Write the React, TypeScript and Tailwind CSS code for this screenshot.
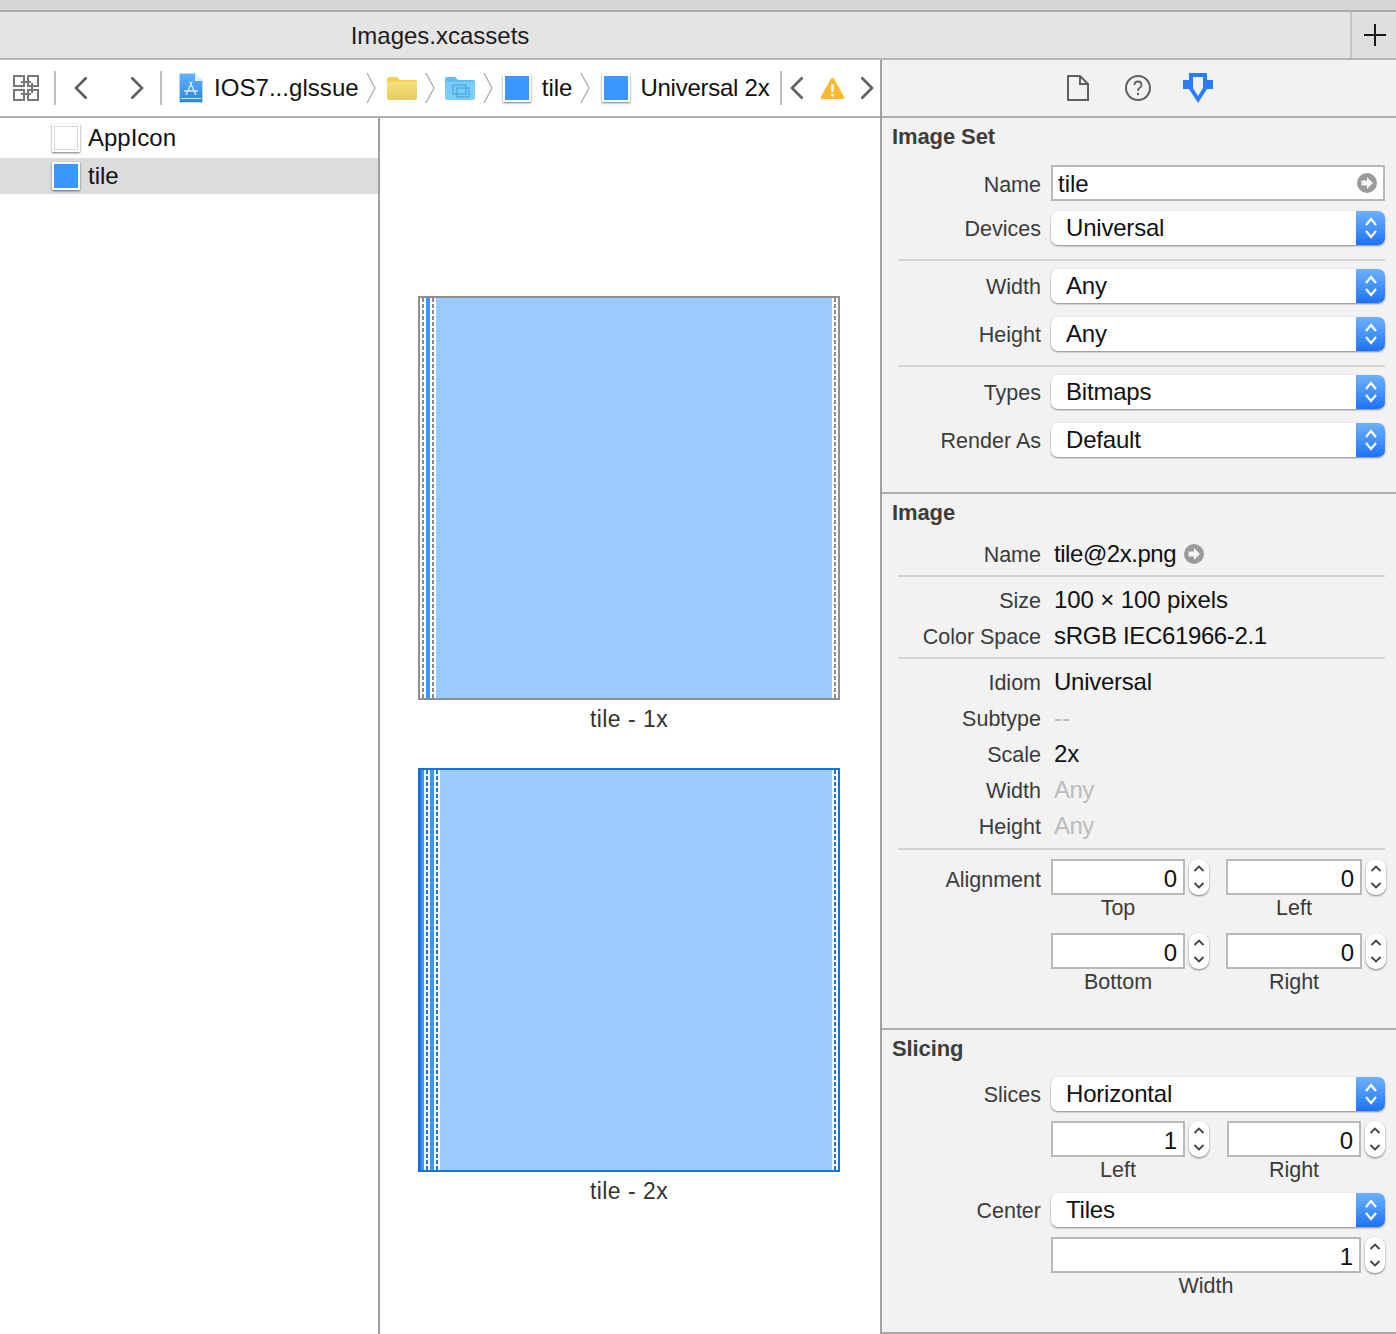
import React from 'react';

const font = 'font-["Liberation_Sans",Arial,sans-serif]';

const Chevron = ({ dir, className = '' }: { dir: 'left' | 'right'; className?: string }) => (
  <svg viewBox="0 0 14 24" className={`w-[14px] h-[24px] shrink-0 ${className}`}>
    <path
      d={dir === 'left' ? 'M12.5 1.5 L2 12 L12.5 22.5' : 'M1.5 1.5 L12 12 L1.5 22.5'}
      fill="none"
      stroke="#5e5e5e"
      strokeWidth="2.6"
    />
  </svg>
);

const Crumb = ({ className = '' }: { className?: string }) => (
  <svg viewBox="0 0 10 32" className={`w-[10px] h-[32px] shrink-0 ${className}`}>
    <path d="M1 1 L9 16 L1 31" fill="none" stroke="#adadad" strokeWidth="1.3" />
  </svg>
);

const NavSep = ({ className = '' }: { className?: string }) => (
  <div className={`w-[2px] h-[34px] bg-[#bdbdbd] shrink-0 ${className}`} />
);

const Swatch = ({ empty, className = '' }: { empty?: boolean; className?: string }) => (
  <div className={`w-[28px] h-[28px] shrink-0 bg-white p-[2px] shadow-[0_1px_2px_rgba(0,0,0,0.55)] ${className}`}>
    <div className={empty ? 'w-full h-full border border-[#d8d8d8] bg-white' : 'w-full h-full bg-[#3a97fd]'} />
  </div>
);

const GoArrow = ({ className = '' }: { className?: string }) => (
  <svg viewBox="0 0 20 20" className={`w-[20px] h-[20px] shrink-0 ${className}`}>
    <circle cx="10" cy="10" r="10" fill="#9b9b9b" />
    <path d="M10 4 L16 10 L10 16 V12.5 H4.5 V7.5 H10 Z" fill="#f4f4f4" />
  </svg>
);

const UpDown = ({ color, className = '' }: { color: string; className?: string }) => (
  <svg viewBox="0 0 14 26" className={`w-[14px] h-[26px] ${className}`}>
    <path d="M2 10 L7 4 L12 10 M2 16 L7 22 L12 16" fill="none" stroke={color} strokeWidth="2.2" />
  </svg>
);

const Popup = ({ value }: { value: string }) => (
  <div className="flex flex-1 h-[34px] rounded-[7px] bg-white shadow-[0_1px_2px_rgba(0,0,0,0.45)] overflow-hidden">
    <div className="flex-1 pl-[15px] text-[24px] leading-[34px] tracking-[-0.2px] text-[#111]">{value}</div>
    <div className="w-[29px] flex items-center justify-center bg-gradient-to-b from-[#6db1fb] to-[#1a72f8]">
      <UpDown color="#fff" />
    </div>
  </div>
);

const Stepper = () => (
  <div className="w-[20px] h-[36px] shrink-0 ml-[4px] rounded-[9px] bg-white shadow-[0_1px_2px_rgba(0,0,0,0.5)] flex items-center justify-center">
    <svg viewBox="0 0 12 30" className="w-[12px] h-[30px]">
      <path d="M1.5 9 L6 4.5 L10.5 9 M1.5 21 L6 25.5 L10.5 21" fill="none" stroke="#444" strokeWidth="1.8" />
    </svg>
  </div>
);

const NumField = ({ value, className = '' }: { value: string; className?: string }) => (
  <div className={`h-[36px] border-2 border-[#b9b9b9] bg-white text-right pr-[6px] text-[24px] leading-[35px] text-[#111] ${className}`}>
    {value}
  </div>
);

const Label = ({ children, className = 'pt-[2px] leading-[30px]' }: { children: React.ReactNode; className?: string }) => (
  <div className={`w-[159px] shrink-0 text-right text-[21.5px] text-[#3b3b3b] mr-[10px] ${className}`}>{children}</div>
);

const Row = ({ label, children, className = '', labelClass }: { label: string; children: React.ReactNode; className?: string; labelClass?: string }) => (
  <div className={`flex items-center ${className}`}>
    <Label className={labelClass}>{label}</Label>
    <div className="flex flex-1 items-center min-w-0">{children}</div>
  </div>
);

const InfoRow = ({ label, value, muted, spacing = 'tracking-[-0.1px]' }: { label: string; value: string; muted?: boolean; spacing?: string }) => (
  <div className="flex items-center h-[36px]">
    <Label>{label}</Label>
    <div className={`pl-[3px] text-[24px] ${spacing} ${muted ? 'text-[#bcbcbc]' : 'text-[#111]'}`}>{value}</div>
  </div>
);

const Sep = ({ className = '' }: { className?: string }) => (
  <div className={`h-[2px] bg-[#d2d2d2] ml-[16px] ${className}`} />
);

const Heading = ({ children }: { children: React.ReactNode }) => (
  <div className="pl-[10px] text-[22px] leading-[28px] font-bold tracking-[-0.1px] text-[#3d3d3d]">{children}</div>
);

const SubLabel = ({ children, className = '' }: { children: React.ReactNode; className?: string }) => (
  <div className={`text-center text-[21.5px] leading-[26px] text-[#3b3b3b] ${className}`}>{children}</div>
);

const Dashes = ({ selected }: { selected?: boolean }) => (
  <div className="w-[6px] bg-white flex justify-center">
    <div
      className={`w-[2px] h-full ${
        selected
          ? 'bg-[repeating-linear-gradient(to_bottom,#1f78e0_0,#1f78e0_4px,transparent_4px,transparent_6px)]'
          : 'bg-[repeating-linear-gradient(to_bottom,#8a8a8a_0,#8a8a8a_4px,transparent_4px,transparent_6px)]'
      }`}
    />
  </div>
);

const Tile = ({ selected, caption }: { selected?: boolean; caption: string }) => (
  <div className="w-[422px]">
    <div className={`h-[404px] border-2 flex ${selected ? 'border-[#1a6fd8]' : 'border-[#8f8f8f]'}`}>
      {selected && <div className="w-[1px] bg-[#1a6fd8]" />}
      {selected && <div className="w-[3px] bg-[#3a97fd]" />}
      <Dashes selected={selected} />
      <div className="w-[4px] bg-[#3a97fd]" />
      <Dashes selected={selected} />
      <div className="flex-1 bg-[#9bcbfe]" />
      <Dashes selected={selected} />
    </div>
    <div className="text-center text-[23px] leading-[26px] tracking-[0.45px] mt-[6px] text-[#333]">{caption}</div>
  </div>
);

const App = () => {
  return (
    <div className={`w-[1396px] h-[1334px] overflow-hidden flex flex-col bg-white ${font}`}>
      {/* tab strip */}
      <div className="h-[12px] shrink-0 bg-[#d6d6d6] border-b-2 border-[#ababab]" />
      <div className="h-[48px] shrink-0 flex bg-[#e4e4e4] border-b-2 border-[#b5b5b5]">
        <div className="w-[880px] text-center text-[24px] leading-[48px] text-[#1c1c1c]">Images.xcassets</div>
        <div className="flex-1" />
        <div className="w-[46px] border-l-2 border-[#c4c4c4] bg-[#dfdfdf] flex items-center justify-center pl-[2px]">
          <svg viewBox="0 0 22 22" className="w-[22px] h-[22px]">
            <path d="M11 0 V22 M0 11 H22" stroke="#1a1a1a" strokeWidth="2" />
          </svg>
        </div>
      </div>

      <div className="flex flex-1 min-h-0">
        {/* editor side */}
        <div className="w-[882px] shrink-0 flex flex-col border-r-2 border-[#a2a2a2]">
          <div className="h-[58px] shrink-0 flex items-center border-b-2 border-[#b0b0b0] text-[24px] text-[#111]">
            <svg viewBox="0 0 26 26" className="w-[26px] h-[26px] ml-[13px] shrink-0">
              <g fill="none" stroke="#777" strokeWidth="2">
                <rect x="1" y="1" width="10" height="10" />
                <rect x="15" y="1" width="10" height="10" />
                <rect x="1" y="15" width="10" height="10" />
                <rect x="15" y="15" width="10" height="10" />
                <path d="M8 7 H18 M19 8 V18 M8 19 H18" />
              </g>
            </svg>
            <NavSep className="ml-[15px]" />
            <Chevron dir="left" className="ml-[18px]" />
            <Chevron dir="right" className="ml-[42px]" />
            <NavSep className="ml-[16px]" />
            <svg viewBox="0 0 24 30" className="w-[24px] h-[30px] ml-[17px] shrink-0">
              <defs>
                <linearGradient id="docBlue" x1="0" y1="0" x2="0" y2="1">
                  <stop offset="0" stopColor="#62b4f7" />
                  <stop offset="1" stopColor="#2f83e4" />
                </linearGradient>
              </defs>
              <path d="M0.5 0.5 H16 L23.5 8 V29.5 H0.5 Z" fill="url(#docBlue)" stroke="#b9d9f7" strokeWidth="1" />
              <path d="M16 0.5 V8 H23.5 Z" fill="#e6f0fb" />
              <path d="M2 25.5 H22" stroke="#cfe4fb" strokeWidth="1" />
              <path d="M7 22 L13 9 M17 22 L11 9 M5 18 H19" stroke="#dcecfd" strokeWidth="1.3" fill="none" />
            </svg>
            <span className="ml-[11px] whitespace-nowrap tracking-[0.05px]">IOS7...glssue</span>
            <Crumb className="ml-[7px]" />
            <svg viewBox="0 0 30 24" className="w-[30px] h-[24px] ml-[11px] shrink-0">
              <defs>
                <linearGradient id="folderY" x1="0" y1="0" x2="0" y2="1">
                  <stop offset="0" stopColor="#f6df80" />
                  <stop offset="1" stopColor="#e6cb60" />
                </linearGradient>
              </defs>
              <path d="M0 3 Q0 1 2 1 H10 L13 4 H28 Q30 4 30 6 V10 H0 Z" fill="#f3d34f" />
              <path d="M0 6 H30 V22 Q30 24 28 24 H2 Q0 24 0 22 Z" fill="url(#folderY)" />
            </svg>
            <Crumb className="ml-[8px]" />
            <svg viewBox="0 0 30 24" className="w-[30px] h-[24px] ml-[10px] shrink-0">
              <path d="M0 3 Q0 1 2 1 H10 L13 4 H28 Q30 4 30 6 V10 H0 Z" fill="#5fbdf6" />
              <path d="M0 6 H30 V22 Q30 24 28 24 H2 Q0 24 0 22 Z" fill="#7ccdf9" />
              <rect x="8" y="9" width="13" height="9" fill="none" stroke="#3f9bd8" strokeWidth="1" />
              <rect x="12" y="12" width="12" height="9" fill="none" stroke="#3f9bd8" strokeWidth="1" />
            </svg>
            <Crumb className="ml-[8px]" />
            <Swatch className="ml-[10px]" />
            <span className="ml-[11px]">tile</span>
            <Crumb className="ml-[8px]" />
            <Swatch className="ml-[12px]" />
            <span className="ml-[10px] whitespace-nowrap tracking-[-0.25px]">Universal 2x</span>
            <NavSep className="ml-[11px]" />
            <Chevron dir="left" className="ml-[8px]" />
            <svg viewBox="0 0 26 24" className="w-[25px] h-[24px] ml-[16px] shrink-0">
              <path d="M13 1.5 Q14 1.5 15 3 L25 21 Q26 23.5 23.5 23.5 H2.5 Q0 23.5 1 21 L11 3 Q12 1.5 13 1.5 Z" fill="#fdb92e" />
              <path d="M13 8 V16" stroke="#fff" strokeWidth="2.6" />
              <circle cx="13" cy="19.5" r="1.5" fill="#fff" />
            </svg>
            <Chevron dir="right" className="ml-[15px]" />
          </div>

          <div className="flex flex-1 min-h-0">
            {/* asset list */}
            <div className="w-[380px] shrink-0 border-r-2 border-[#9f9f9f] text-[24px] text-[#111]">
              <div className="h-[40px] flex items-center pl-[52px]">
                <Swatch empty />
                <span className="ml-[8px]">AppIcon</span>
              </div>
              <div className="h-[36px] flex items-center pl-[52px] bg-[#dcdcdc]">
                <Swatch />
                <span className="ml-[8px]">tile</span>
              </div>
            </div>

            {/* canvas */}
            <div className="flex-1 pt-[178px] pl-[38px] flex flex-col gap-[36px]">
              <Tile caption="tile - 1x" />
              <Tile selected caption="tile - 2x" />
            </div>
          </div>
        </div>

        {/* inspector */}
        <div className="flex-1 min-w-0 flex flex-col bg-[#f2f2f2] border-b-2 border-[#a8a8a8]">
          <div className="h-[58px] shrink-0 flex items-center pl-[185px] border-b-2 border-[#b0b0b0]">
            <svg viewBox="0 0 22 26" className="w-[22px] h-[26px] shrink-0">
              <path d="M1 1 H13 L21 9 V25 H1 Z M13 1 V9 H21" fill="none" stroke="#5f5f5f" strokeWidth="2" />
            </svg>
            <svg viewBox="0 0 26 26" className="w-[26px] h-[26px] ml-[36px] shrink-0">
              <circle cx="13" cy="13" r="12" fill="none" stroke="#5f5f5f" strokeWidth="2" />
              <path d="M9.5 10 Q9.5 6.5 13 6.5 Q16.5 6.5 16.5 10 Q16.5 12 14.5 13 Q13 14 13 16" fill="none" stroke="#5f5f5f" strokeWidth="1.8" />
              <circle cx="13" cy="19" r="1.2" fill="#5f5f5f" />
            </svg>
            <svg viewBox="0 0 30 30" className="w-[30px] h-[30px] ml-[32px] shrink-0">
              <path d="M6 0 H24 V7 H30 V16 H24 L15 30 L6 16 H0 V7 H6 Z" fill="#2b7cf6" />
              <path d="M10 4 H20 V15 L15 23 L10 15 Z" fill="#f2f2f2" />
            </svg>
          </div>

          {/* Image Set */}
          <div className="h-[376px] shrink-0 border-b-2 border-[#b0b0b0] pt-[5px] pr-[11px]">
            <Heading>Image Set</Heading>
            <Row label="Name" className="mt-[14px]" labelClass="pt-[4px] leading-[30px]">
              <div className="flex-1 h-[36px] border-2 border-[#b9b9b9] bg-white pl-[5px] pr-[6px] flex items-center justify-between text-[24px] text-[#111]">
                <span className="pt-[1px]">tile</span>
                <GoArrow />
              </div>
            </Row>
            <Row label="Devices" className="mt-[10px]"><Popup value="Universal" /></Row>
            <Sep className="mt-[14px]" />
            <Row label="Width" className="mt-[8px]"><Popup value="Any" /></Row>
            <Row label="Height" className="mt-[14px]"><Popup value="Any" /></Row>
            <Sep className="mt-[14px]" />
            <Row label="Types" className="mt-[8px]"><Popup value="Bitmaps" /></Row>
            <Row label="Render As" className="mt-[14px]"><Popup value="Default" /></Row>
          </div>

          {/* Image */}
          <div className="h-[536px] shrink-0 border-b-2 border-[#b0b0b0] pt-[5px] pr-[11px]">
            <Heading>Image</Heading>
            <div className="flex items-center h-[36px] mt-[9px]">
              <Label>Name</Label>
              <div className="pl-[3px] text-[24px] tracking-[-0.45px] text-[#111]">tile@2x.png</div>
              <GoArrow className="ml-[8px]" />
            </div>
            <Sep className="mt-[3px]" />
            <div className="mt-[5px]">
              <InfoRow label="Size" value="100 × 100 pixels" />
              <InfoRow label="Color Space" value="sRGB IEC61966-2.1" spacing="tracking-[-0.35px]" />
            </div>
            <Sep className="mt-[3px]" />
            <div className="mt-[5px]">
              <InfoRow label="Idiom" value="Universal" spacing="tracking-[-0.25px]" />
              <InfoRow label="Subtype" value="--" muted />
              <InfoRow label="Scale" value="2x" />
              <InfoRow label="Width" value="Any" muted spacing="tracking-[-0.5px]" />
              <InfoRow label="Height" value="Any" muted spacing="tracking-[-0.5px]" />
            </div>
            <Sep className="mt-[4px]" />
            <div className="flex mt-[9px]">
              <Label className="leading-[42px]">Alignment</Label>
              <div className="grid grid-cols-[158px_160px] gap-x-[17px] gap-y-[12px]">
                {['Top', 'Left', 'Bottom', 'Right'].map(side => (
                  <div key={side}>
                    <div className="flex">
                      <NumField value="0" className="flex-1" />
                      <Stepper />
                    </div>
                    <SubLabel className="pr-[24px]">{side}</SubLabel>
                  </div>
                ))}
              </div>
            </div>
          </div>

          {/* Slicing */}
          <div className="flex-1 pt-[5px] pr-[11px]">
            <Heading>Slicing</Heading>
            <Row label="Slices" className="mt-[14px]"><Popup value="Horizontal" /></Row>
            <div className="flex mt-[10px]">
              <div className="w-[169px] shrink-0" />
              <div className="grid grid-cols-[158px_158px] gap-x-[18px]">
                {[['Left', '1'], ['Right', '0']].map(([side, value]) => (
                  <div key={side}>
                    <div className="flex">
                      <NumField value={value} className="flex-1" />
                      <Stepper />
                    </div>
                    <SubLabel className="pr-[24px]">{side}</SubLabel>
                  </div>
                ))}
              </div>
            </div>
            <Row label="Center" className="mt-[10px]"><Popup value="Tiles" /></Row>
            <div className="flex mt-[10px]">
              <div className="w-[169px] shrink-0" />
              <div className="flex-1">
                <div className="flex">
                  <NumField value="1" className="flex-1" />
                  <Stepper />
                </div>
                <SubLabel className="pr-[24px]">Width</SubLabel>
              </div>
            </div>
          </div>
        </div>
      </div>
    </div>
  );
};

export default App;
